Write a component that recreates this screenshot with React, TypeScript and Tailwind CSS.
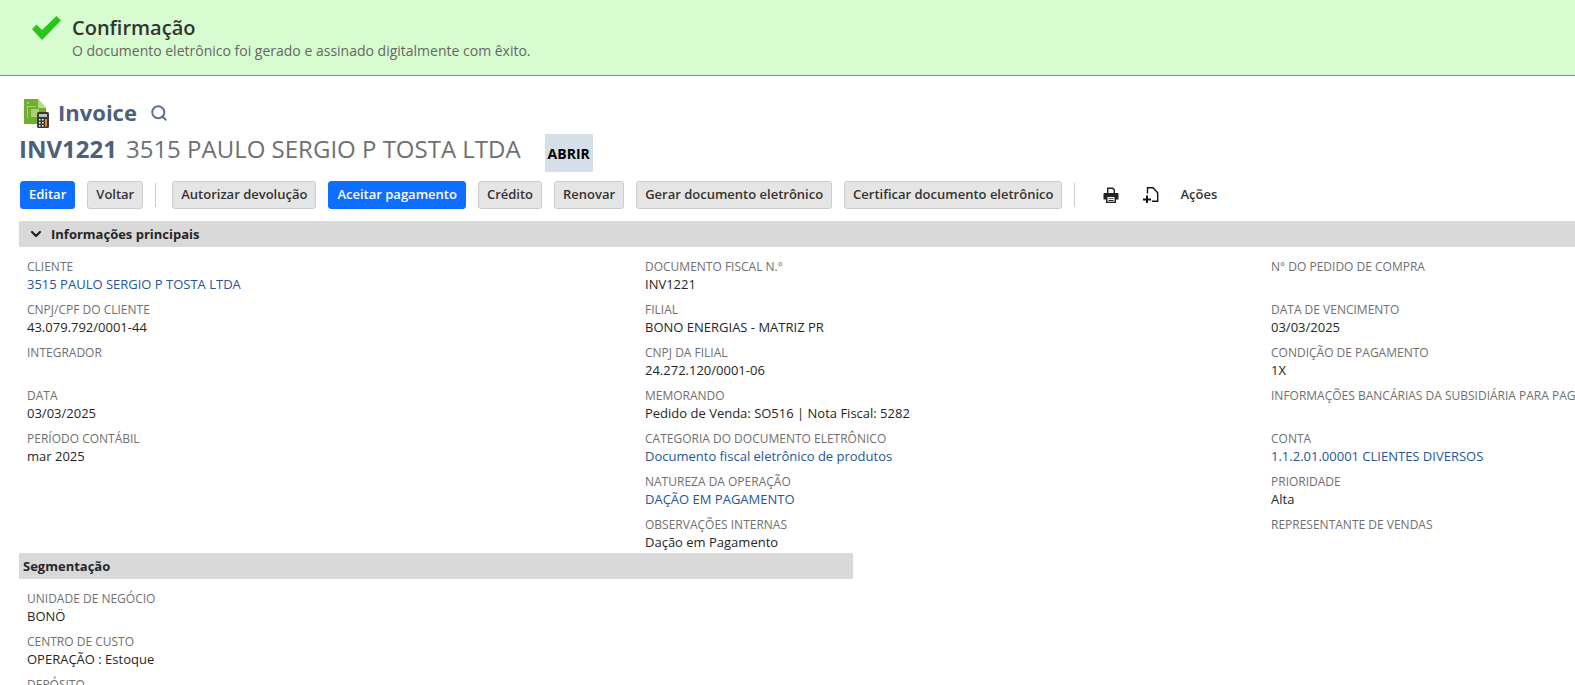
import { ChevronDown, Search } from 'lucide-react'

type Field = { label: string; value?: string; link?: boolean }

const colA: Field[] = [
  { label: 'CLIENTE', value: '3515 PAULO SERGIO P TOSTA LTDA', link: true },
  { label: 'CNPJ/CPF DO CLIENTE', value: '43.079.792/0001-44' },
  { label: 'INTEGRADOR' },
  { label: 'DATA', value: '03/03/2025' },
  { label: 'PERÍODO CONTÁBIL', value: 'mar 2025' },
]

const colB: Field[] = [
  { label: 'DOCUMENTO FISCAL N.°', value: 'INV1221' },
  { label: 'FILIAL', value: 'BONO ENERGIAS - MATRIZ PR' },
  { label: 'CNPJ DA FILIAL', value: '24.272.120/0001-06' },
  { label: 'MEMORANDO', value: 'Pedido de Venda: SO516 | Nota Fiscal: 5282' },
  { label: 'CATEGORIA DO DOCUMENTO ELETRÔNICO', value: 'Documento fiscal eletrônico de produtos', link: true },
  { label: 'NATUREZA DA OPERAÇÃO', value: 'DAÇÃO EM PAGAMENTO', link: true },
  { label: 'OBSERVAÇÕES INTERNAS', value: 'Dação em Pagamento' },
]

const colC: Field[] = [
  { label: 'N° DO PEDIDO DE COMPRA' },
  { label: 'DATA DE VENCIMENTO', value: '03/03/2025' },
  { label: 'CONDIÇÃO DE PAGAMENTO', value: '1X' },
  { label: 'INFORMAÇÕES BANCÁRIAS DA SUBSIDIÁRIA PARA PAGAMENTO' },
  { label: 'CONTA', value: '1.1.2.01.00001 CLIENTES DIVERSOS', link: true },
  { label: 'PRIORIDADE', value: 'Alta' },
  { label: 'REPRESENTANTE DE VENDAS' },
]

const colSeg: Field[] = [
  { label: 'UNIDADE DE NEGÓCIO', value: 'BONÖ' },
  { label: 'CENTRO DE CUSTO', value: 'OPERAÇÃO : Estoque' },
  { label: 'DEPÓSITO' },
]

function FieldBlock({ field }: { field: Field }) {
  return (
    <div className="h-[43px] whitespace-nowrap">
      <div className="h-[17px] text-[12px] leading-[18px] text-[#6f6f6f]">{field.label}</div>
      <div className={`h-[18px] text-[13px] leading-[18px] ${field.link ? 'text-[#255599]' : 'text-[#262626]'}`}>
        {field.value}
      </div>
    </div>
  )
}

function Btn({ label, primary }: { label: string; primary?: boolean }) {
  return (
    <button
      className={`h-[28px] rounded-[3px] border px-[8px] text-[13px] font-semibold whitespace-nowrap ${
        primary ? 'border-[#0d6eff] bg-[#0d6eff] text-white' : 'border-[#cccccc] bg-[#e5e5e5] text-[#333333]'
      }`}
    >
      {label}
    </button>
  )
}

function InvoiceIcon() {
  return (
    <svg width="30" height="30" viewBox="0 0 30 30">
      <path d="M5 1h14l8 9v16H5z" fill="#6fae2e" />
      <path d="M19 1l8 9h-8z" fill="#b9d68d" />
      <path d="M8 4h2v2H8zM8 8h9v1H9v11H8zM12 11h8v8h-8z" fill="#a8cf72" />
      <rect x="18" y="14" width="12" height="16" rx="1.500" fill="#3a3a3a" />
      <rect x="20" y="16" width="8" height="3" fill="#b9c7b0" />
      <path d="M20 21h1.500v1.500H20zM23 21h1.500v1.500H23zM20 24h1.500v1.500H20zM23 24h1.500v1.500H23zM20 27h1.500v1.500H20zM23 27h1.500v1.500H23z" fill="#ffffff" />
      <path d="M26 21h2v7.500h-2z" fill="#e88b1f" />
    </svg>
  )
}

function App() {
  return (
    <div className="h-[685px] w-[1575px] overflow-hidden bg-white font-['Open_Sans',sans-serif]">
      <div className="flex h-[76px] border-b border-[#3cc02c] bg-[#d7fccf] pt-[17px] pl-[32px]">
        <svg width="29" height="25" viewBox="0 0 29 25" className="-mt-[1px]">
          <path d="M0 13l4.500-4.500 5.500 5.500L24.500 0 29 4.500 10 24z" fill="#29c518" />
        </svg>
        <div className="ml-[11px]">
          <div className="text-[20px] leading-[22px] font-semibold text-[#333333]">Confirmação</div>
          <div className="mt-[2px] text-[14px] leading-[20px] text-[#666666]">
            O documento eletrônico foi gerado e assinado digitalmente com êxito.
          </div>
        </div>
      </div>

      <div className="pt-[20px] pl-[19px]">
        <div className="flex h-[34px] items-center">
          <InvoiceIcon />
          <span className="ml-[9px] -translate-y-[1px] text-[22px] font-bold text-[#4d5f79]">Invoice</span>
          <Search size={18} strokeWidth={2.6} className="ml-[13px] text-[#5a6f92]" />
        </div>
        <div className="flex h-[42px] items-start">
          <span className="h-[38px] text-[24px] leading-[38px] font-bold text-[#4d5f79]">INV1221</span>
          <span className="ml-[9px] h-[38px] text-[24px] leading-[38px] text-[#6f6f6f]">3515 PAULO SERGIO P TOSTA LTDA</span>
          <span className="mt-[4px] ml-[24px] flex h-[38px] w-[48px] items-center justify-center bg-[#d5dfe9] text-[14px] font-bold text-black">
            ABRIR
          </span>
        </div>

        <div className="mt-[9px] ml-[1px] flex h-[28px] items-center">
          <Btn label="Editar" primary />
          <div className="ml-[12px]"><Btn label="Voltar" /></div>
          <div className="ml-[12px] h-[24px] w-px bg-[#cccccc]" />
          <div className="ml-[16px] flex gap-[12px]">
            <Btn label="Autorizar devolução" />
            <Btn label="Aceitar pagamento" primary />
            <Btn label="Crédito" />
            <Btn label="Renovar" />
            <Btn label="Gerar documento eletrônico" />
            <Btn label="Certificar documento eletrônico" />
          </div>
          <div className="ml-[12px] h-[24px] w-px bg-[#cccccc]" />
          <svg width="16" height="16" viewBox="0 0 16 16" className="ml-[28px]">
            <path d="M4 0.500h6l2 2V6h-1.400V3.200L9.400 1.900H5.400V6H4z" fill="#222222" />
            <path d="M1.500 6h13c.5 0 1 .5 1 1v5.500h-2.500V16H3v-3.500H.5V7c0-.5.5-1 1-1z" fill="#222222" />
            <path d="M4.500 10h7v4.700h-7z" fill="#ffffff" />
            <path d="M5.500 11.200h5v.9h-5zM5.500 13h5v.9h-5z" fill="#222222" />
          </svg>
          <svg width="16" height="16" viewBox="0 0 16 16" className="ml-[24px]">
            <path d="M4.500 6.500V0.700h5.500l4.700 5v8.600H9" fill="none" stroke="#111111" strokeWidth="1.400" />
            <path d="M0 12.500h8M4 8.500v7.500" fill="none" stroke="#111111" strokeWidth="2" />
          </svg>
          <span className="ml-[21px] text-[13px] font-semibold text-[#333333]">Ações</span>
        </div>

        <div className="mt-[12px] flex h-[26px] items-center bg-[#d9d9d9] pl-[9px]">
          <ChevronDown size={16} strokeWidth={3.4} className="text-[#222222]" />
          <span className="ml-[7px] translate-y-[1px] text-[13px] font-bold text-[#262626]">Informações principais</span>
        </div>

        <div className="grid grid-cols-[618px_626px_1fr] pt-[11px] pl-[8px]">
          <div>
            {colA.map((f) => (
              <FieldBlock key={f.label} field={f} />
            ))}
          </div>
          <div>
            {colB.map((f) => (
              <FieldBlock key={f.label} field={f} />
            ))}
          </div>
          <div>
            {colC.map((f) => (
              <FieldBlock key={f.label} field={f} />
            ))}
          </div>
        </div>

        <div className="-mt-[6px] flex h-[26px] w-[834px] items-center bg-[#d9d9d9] pt-[1px] pl-[4px] text-[13px] font-bold text-[#262626]">
          Segmentação
        </div>
        <div className="pt-[11px] pl-[8px]">
          {colSeg.map((f) => (
            <FieldBlock key={f.label} field={f} />
          ))}
        </div>
      </div>
    </div>
  )
}

export default App
